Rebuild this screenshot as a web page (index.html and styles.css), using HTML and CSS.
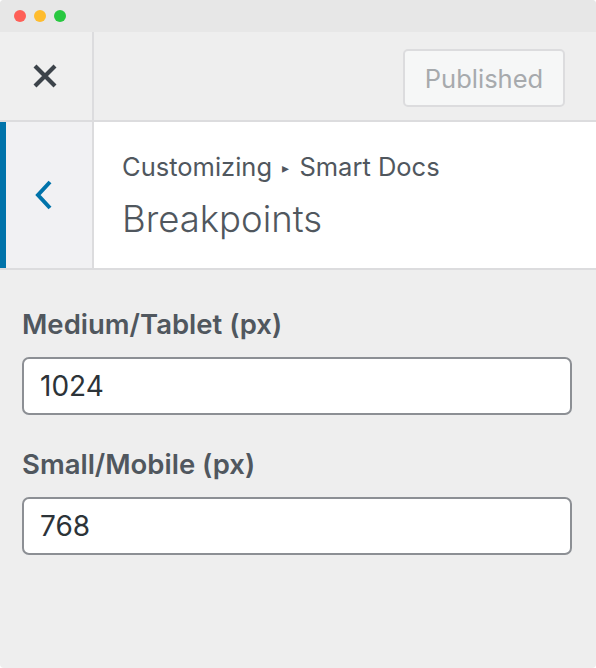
FILE: index.html
```html
<!DOCTYPE html>
<html>
<head>
<meta charset="utf-8">
<link rel="stylesheet" href="styles.css">
</head>
<body>
<div class="window">
  <div class="titlebar">
    <span class="dot red"></span>
    <span class="dot yellow"></span>
    <span class="dot green"></span>
  </div>
  <div class="header">
    <div class="close">
      <svg width="24" height="24" viewBox="0 0 24 24"><path d="M2 2 L22 22 M22 2 L2 22" stroke="#3c434a" stroke-width="4.2" fill="none"/></svg>
    </div>
    <div class="header-actions">
      <button class="published">Published</button>
    </div>
  </div>
  <div class="section-head">
    <div class="back">
      <svg width="20" height="30" viewBox="0 0 20 30"><path d="M16 2 L4 15 L16 28" stroke="#0073aa" stroke-width="4" fill="none"/></svg>
    </div>
    <div class="titles">
      <div class="crumb">Customizing <span class="arrow">▸</span> Smart Docs</div>
      <div class="title">Breakpoints</div>
    </div>
  </div>
  <div class="controls">
    <div class="field">
      <label class="label">Medium/Tablet (px)</label>
      <div class="input">1024</div>
    </div>
    <div class="field">
      <label class="label">Small/Mobile (px)</label>
      <div class="input">768</div>
    </div>
  </div>
</div>
</body>
</html>
```

FILE: styles.css
```css
html, body {
  margin: 0;
  padding: 0;
  background: #ffffff;
}
.window {
  width: 596px;
  height: 668px;
  background: #eeeeee;
  font-family: Inter, "Noto Sans", sans-serif;
  display: flex;
  flex-direction: column;
  overflow: hidden;
  border-radius: 4px;
}
.titlebar {
  height: 32px;
  background: #e7e7e7;
  display: flex;
  align-items: center;
  gap: 8px;
  padding-left: 14px;
  box-sizing: border-box;
}
.dot {
  width: 12px;
  height: 12px;
  border-radius: 50%;
}
.red { background: #fe5f57; }
.yellow { background: #febc2e; }
.green { background: #28c840; }
.header {
  height: 90px;
  display: flex;
  border-bottom: 2px solid #dcdcde;
  box-sizing: border-box;
  background: #eeeeee;
}
.close {
  width: 94px;
  border-right: 2px solid #dcdcde;
  box-sizing: border-box;
  background: #efefef;
  display: flex;
  align-items: center;
  justify-content: center;
  padding-right: 2px;
}
.header-actions {
  flex: 1;
  display: flex;
  align-items: center;
  justify-content: flex-end;
  padding-right: 31px;
}
.published {
  width: 162px;
  height: 58px;
  background: #f6f7f7;
  border: 2px solid #dcdcde;
  border-radius: 5px;
  color: #a7aaad;
  font-family: Inter, "Noto Sans", sans-serif;
  font-size: 25.5px;
  padding: 0;
  margin-top: 4px;
}
.section-head {
  height: 148px;
  background: #ffffff;
  border-bottom: 2px solid #dcdcde;
  box-sizing: border-box;
  display: flex;
}
.back {
  width: 94px;
  background: #f1f1f3;
  border-left: 6px solid #0073aa;
  border-right: 2px solid #dcdcde;
  box-sizing: border-box;
  display: flex;
  align-items: center;
  justify-content: center;
  padding-right: 10px;
}
.titles {
  flex: 1;
  padding-left: 28px;
  padding-top: 28px;
}
.crumb {
  font-size: 25.5px;
  color: #50575e;
  line-height: 34px;
}
.arrow {
  font-size: 14px;
  position: relative;
  top: -3px;
  margin: 0 3px;
}
.title {
  font-size: 36.5px;
  font-weight: 300;
  color: #50575e;
  line-height: 50px;
  margin-top: 6px;
}
.controls {
  padding: 37px 24px 0 22px;
  display: flex;
  flex-direction: column;
  gap: 32px;
}
.label {
  display: block;
  font-size: 27.5px;
  font-weight: 600;
  color: #50575e;
  line-height: 34px;
  margin-bottom: 16px;
}
.input {
  height: 58px;
  border: 2px solid #8c8f94;
  border-radius: 7px;
  background: #ffffff;
  box-sizing: border-box;
  padding-left: 16px;
  font-size: 28px;
  color: #2c3338;
  display: flex;
  align-items: center;
}
```
